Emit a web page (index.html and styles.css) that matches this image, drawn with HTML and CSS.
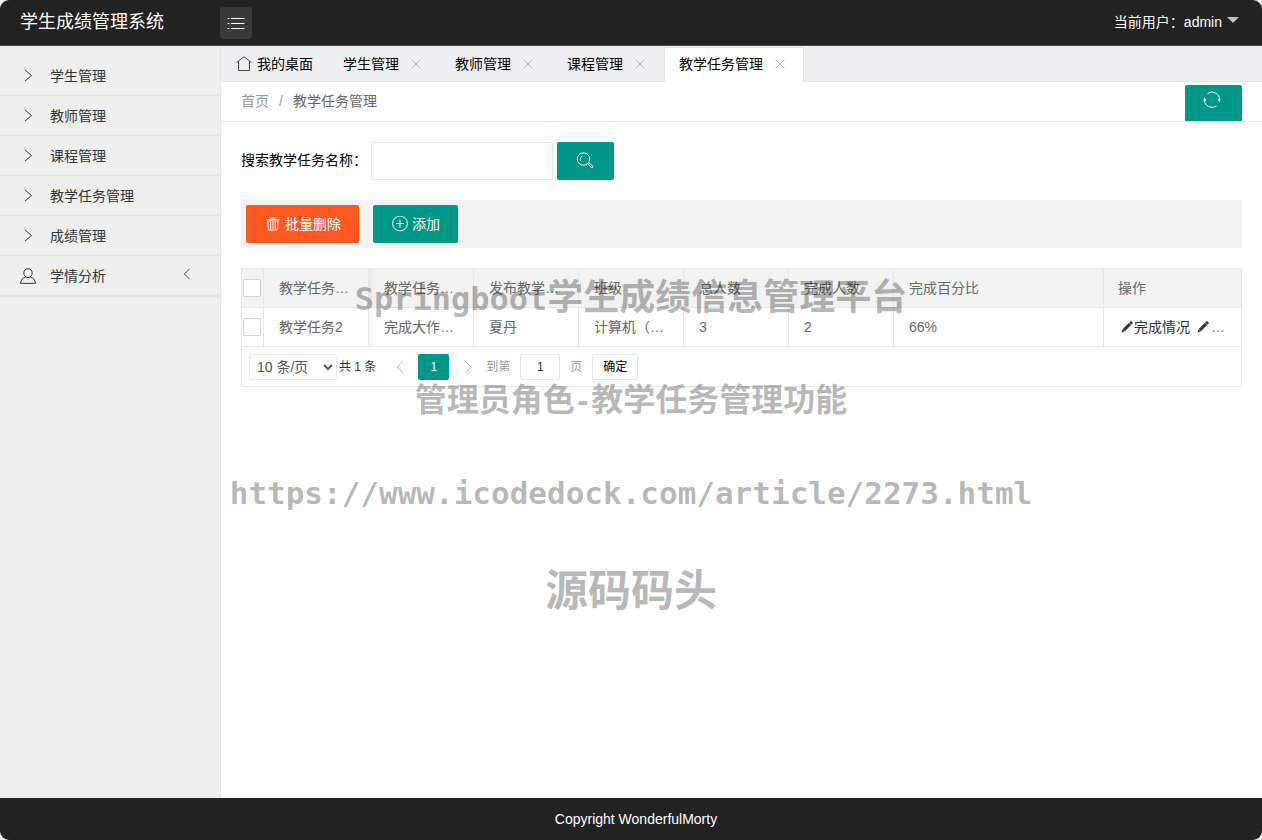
FILE: index.html
```html
<!DOCTYPE html>
<html lang="zh-CN">
<head>
<meta charset="utf-8">
<meta name="viewport" content="width=device-width, initial-scale=1">
<title>学生成绩管理系统</title>
<link rel="stylesheet" href="styles.css">
</head>
<body>
<svg class="sprite" aria-hidden="true">
  <symbol id="right" viewBox="0 0 16 16"><path d="M5 2l6.500 5.500L5 13"/></symbol>
  <symbol id="left" viewBox="0 0 16 16"><path d="M11 2L5 8l6 6"/></symbol>
  <symbol id="next" viewBox="0 0 16 16"><path d="M5 2l6 6-6 6"/></symbol>
  <symbol id="close" viewBox="0 0 14 14"><path d="M2.500 2.500l9 9M11.500 2.500l-9 9"/></symbol>
  <symbol id="pen" viewBox="0 0 14 14"><path d="M1.500 12.500l1-3.200 2.200 2.200zM2.700 9.100l6.200-6.200 2.200 2.200-6.200 6.200zM9.200 2.600l1-1c.5-.5 1-.5 1.500 0l.7.7c.5.5.5 1 0 1.500l-1 1z"/></symbol>
</svg>
<div class="app">
  <header class="header">
    <h1 class="logo">学生成绩管理系统</h1>
    <button class="toggle" type="button" aria-label="菜单">
      <svg class="icon icon-18" viewBox="0 0 18 18"><path d="M.5 4.500h2M4 4.500h13.500M.5 9.500h2M4 9.500h13.500M.5 14.500h2M4 14.500h13.500"/></svg>
    </button>
    <a class="user" href="#">当前用户：admin<span class="caret"></span></a>
  </header>
  <div class="body">
    <nav class="side">
      <a class="side-item" href="#"><svg class="icon icon-16"><use href="#right"/></svg>学生管理</a>
      <a class="side-item" href="#"><svg class="icon icon-16"><use href="#right"/></svg>教师管理</a>
      <a class="side-item" href="#"><svg class="icon icon-16"><use href="#right"/></svg>课程管理</a>
      <a class="side-item" href="#"><svg class="icon icon-16"><use href="#right"/></svg>教学任务管理</a>
      <a class="side-item" href="#"><svg class="icon icon-16"><use href="#right"/></svg>成绩管理</a>
      <a class="side-item side-last" href="#"><svg class="icon icon-16" viewBox="0 0 16 16"><path d="M8 .7c2.500 0 4.200 1.900 4.200 4.300S10.500 9.500 8 9.500 3.800 7.400 3.800 5 5.500.7 8 .7zM5.500 9.200C2.500 10 .8 12 .5 15.400h15c-.3-3.400-2-5.400-5-6.200"/></svg>学情分析<svg class="icon icon-14 side-more"><use href="#left"/></svg></a>
    </nav>
    <main class="main">
      <div class="tabs">
        <a class="tab tab-home" href="#"><svg class="icon icon-16" viewBox="0 0 16 16"><path d="M.5 6.500L8 .8l7.500 5.700M2.500 5.500v9h11v-9"/></svg>我的桌面</a>
        <a class="tab" href="#">学生管理<svg class="icon icon-14"><use href="#close"/></svg></a>
        <a class="tab" href="#">教师管理<svg class="icon icon-14"><use href="#close"/></svg></a>
        <a class="tab" href="#">课程管理<svg class="icon icon-14"><use href="#close"/></svg></a>
        <a class="tab tab-active" href="#">教学任务管理<svg class="icon icon-14"><use href="#close"/></svg></a>
      </div>
      <div class="crumbs">
        <a class="crumb" href="#">首页</a><span class="crumb">/</span><span class="crumb-now">教学任务管理</span>
        <button class="btn refresh" type="button" aria-label="刷新">
          <svg class="icon icon-18" viewBox="0 0 18 18"><path d="M4.500 2.500A7.700 7.700 0 0 1 16.600 9M13.500 15A7.700 7.700 0 0 1 1.400 8.500"/><path class="tip" d="M14.400 8.200l2.300 3 1-4zM3.600 9.500L1.300 6.300l-1 4.200z"/></svg>
        </button>
      </div>
      <div class="content">
        <form class="search">
          <label for="task">搜索教学任务名称：</label>
          <input class="box search-box" id="task" type="text">
          <button class="btn btn-icon" type="button" aria-label="搜索">
            <svg class="icon icon-18" viewBox="0 0 18 18"><circle cx="7.500" cy="7" r="6.200"/><path d="M4.500 8.500c-.5-2 .2-3.700 1.800-4.500"/><path d="M11.800 11.500l1-1 4 3.800c.6.7-.7 2-1.400 1.400z"/></svg>
          </button>
        </form>
        <div class="toolbar">
          <button class="btn btn-danger" type="button"><svg class="icon icon-14" viewBox="0 0 14 14"><path d="M0 2.500h14M4.500 1h5M1 4h12M2 4.500l.5 8.500h9l.5-8.500M4.700 5v7M7 5v7M9.300 5v7"/></svg>批量删除</button>
          <button class="btn btn-add" type="button"><svg class="icon icon-16" viewBox="0 0 16 16"><circle cx="8" cy="7.500" r="7.400"/><path d="M8 3.500v8M4 7.500h8"/></svg>添加</button>
        </div>
        <div class="grid">
          <table>
            <colgroup><col class="c-check"><col class="c-std"><col class="c-std"><col class="c-std"><col class="c-std"><col class="c-std"><col class="c-std"><col><col class="c-act"></colgroup>
            <thead>
              <tr><th class="check"><input type="checkbox" aria-label="全选"></th><th>教学任务…</th><th class="shade">教学任务…</th><th>发布教学…</th><th>班级</th><th>总人数</th><th>完成人数</th><th>完成百分比</th><th>操作</th></tr>
            </thead>
            <tbody>
              <tr><td class="check"><input type="checkbox" aria-label="选择"></td><td>教学任务2</td><td class="shade">完成大作…</td><td>夏丹</td><td>计算机（…</td><td>3</td><td>2</td><td>66%</td><td><div class="actions"><a href="#"><svg class="solid icon-14"><use href="#pen"/></svg>完成情况</a><a href="#" aria-label="编辑"><svg class="solid icon-14"><use href="#pen"/></svg></a><span>…</span></div></td></tr>
            </tbody>
          </table>
          <div class="pager">
            <select class="box limit" aria-label="每页条数"><option>10 条/页</option></select>
            <span class="total">共 1 条</span>
            <button class="arrow" type="button" aria-label="上一页"><svg class="icon icon-16"><use href="#left"/></svg></button>
            <button class="page" type="button">1</button>
            <button class="arrow" type="button" aria-label="下一页"><svg class="icon icon-16"><use href="#next"/></svg></button>
            <label for="page">到第</label>
            <input class="box jump" id="page" type="text" value="1">
            <span>页</span>
            <button class="box confirm" type="button">确定</button>
          </div>
        </div>
      </div>
    </main>
  </div>
  <footer class="footer">Copyright WonderfulMorty</footer>
  <div class="mark">
    <p class="mark-title"><span class="mark-latin">Springboot</span>学生成绩信息管理平台</p>
    <p class="mark-role">管理员角色<span class="mark-dash">-</span>教学任务管理功能</p>
    <p class="mark-url">https://www.icodedock.com/article/2273.html</p>
    <p class="mark-brand">源码码头</p>
  </div>
</div>
</body>
</html>
```

FILE: styles.css
```css
* { box-sizing: border-box; }
body {
  margin: 0;
  background: #f4f4f4;
  color: #000;
  font: 14px/20px "Liberation Sans", "Noto Sans CJK SC", sans-serif;
}
a { color: inherit; text-decoration: none; }
button, input, select { font: inherit; margin: 0; }
button { border: 0; cursor: pointer; }
.sprite { display: none; }
.icon { fill: none; stroke: currentColor; stroke-width: 1; flex: none; }
.solid, .tip { fill: currentColor; stroke: none; flex: none; }
.icon-14 { width: 14px; height: 14px; }
.icon-16 { width: 16px; height: 16px; }
.icon-18 { width: 18px; height: 18px; }

.app {
  position: relative;
  display: flex;
  flex-direction: column;
  min-height: 100vh;
  overflow: hidden;
  border-radius: 9px;
  background: #fff;
}
.header {
  display: flex;
  align-items: center;
  height: 46px;
  padding-right: 23px;
  background: #222;
  border-bottom: 1px solid #484548;
  color: #fff;
}
.logo {
  width: 220px;
  margin: 0;
  padding: 0 0 2px 20px;
  font-size: 18px;
  font-weight: 400;
}
.toggle {
  display: grid;
  place-items: center;
  width: 32px;
  height: 32px;
  padding: 0;
  border-radius: 3px;
  background: #393939;
  color: #fff;
}
.user { display: flex; align-items: center; gap: 5px; margin-left: auto; padding-bottom: 2px; }
.caret {
  margin-bottom: 3px;
  border: 6px solid transparent;
  border-top-color: #c2c2c2;
  border-bottom: 0;
}

.body { display: flex; flex: 1; }
.side {
  flex: none;
  width: 221px;
  padding-top: 10px;
  background: #eee;
  border-right: 1px solid #e3e3e3;
  color: #333;
}
.side-item {
  display: flex;
  align-items: center;
  gap: 14px;
  height: 40px;
  padding: 0 26px 0 20px;
  border-bottom: 1px solid #e2e2e2;
}
.side-last { height: 41px; border-bottom-width: 2px; }
.side-more { margin: 0 0 4px auto; }

.main { flex: 1; min-width: 0; }
.tabs {
  display: flex;
  align-items: flex-end;
  height: 36px;
  background: #eeeef0;
  border-bottom: 1px solid #e2e2e2;
}
.tab {
  display: flex;
  align-items: center;
  gap: 10px;
  height: 34px;
  padding: 0 17px 0 15px;
}
.tab .icon-14 { color: #bbb; }
.tab-home { gap: 5px; padding-right: 15px; }
.tab-home .icon { color: #444; }
.tab-active {
  margin-bottom: -1px;
  height: 35px;
  padding: 0 16px 3px 14px;
  background: #fff;
  border: 1px solid #e2e2e2;
  border-bottom: 0;
}
.crumbs {
  display: flex;
  align-items: center;
  gap: 10px;
  height: 40px;
  padding: 0 20px 2px;
  border-bottom: 1px solid #e5e5e5;
}
.crumb { color: #999; }
.crumb-now { color: #666; }
.btn {
  display: flex;
  align-items: center;
  justify-content: center;
  gap: 4px;
  height: 38px;
  padding: 0 18px;
  border-radius: 2px;
  background: #009688;
  color: #fff;
}
.refresh {
  align-self: flex-end;
  align-items: flex-start;
  width: 57px;
  height: 36px;
  margin: 0 0 -2px auto;
  padding: 6px 3px 0 0;
  border-radius: 2px 2px 0 0;
}
.btn-icon { width: 57px; padding: 0 2px 0 0; }
.btn-danger { padding: 0 18px 0 20px; gap: 5px; background: #ff5722; }
.btn-add { padding-left: 19px; }

.content { padding: 20px; }
.box {
  border: 1px solid #e6e6e6;
  border-radius: 2px;
  background: #fff;
}
.search { display: flex; align-items: center; gap: 4px; }
.search label { width: 126px; padding-bottom: 2px; white-space: nowrap; }
.search-box { width: 182px; height: 38px; padding: 0 10px; }
.toolbar {
  display: flex;
  gap: 14px;
  margin: 20px 0;
  padding: 5px;
  background: #f2f2f2;
}

.grid { border: 1px solid #e6e6e6; color: #666; }
table { width: 100%; table-layout: fixed; border-collapse: separate; border-spacing: 0; }
.c-check { width: 22px; }
.c-std { width: 105px; }
.c-act { width: 137px; }
th, td {
  height: 39px;
  padding: 0 0 0 15px;
  border-right: 1px solid #e6e6e6;
  border-bottom: 1px solid #e6e6e6;
  font-weight: 400;
  text-align: left;
  white-space: nowrap;
}
th { background-color: #f2f2f2; }
th:last-child, td:last-child { border-right: 0; padding-left: 14px; }
.shade {
  background-image: linear-gradient(to right, #0000000a, #00000000 8px);
  background-clip: padding-box;
}
.check { padding: 0 0 0 1px; }
.check input {
  display: block;
  appearance: none;
  width: 18px;
  height: 18px;
  border: 1px solid #d2d2d2;
  border-radius: 2px;
  background: #fff;
}
.actions { display: flex; align-items: center; gap: 6px; padding-left: 2px; }
.actions a { display: flex; align-items: center; color: #333; }
.actions span { margin-left: -5px; }

.pager {
  display: flex;
  align-items: center;
  height: 39px;
  padding: 0 7px;
  color: #999;
  font-size: 12px;
}
.limit { width: 88px; height: 26px; padding-left: 3px; color: #555; font-size: 14px; }
.total { margin: 0 12px 0 2px; color: #333; }
.arrow {
  display: grid;
  place-items: center;
  width: 24px;
  height: 26px;
  padding: 0;
  background: none;
  color: #bbb;
}
.page {
  width: 31px;
  height: 26px;
  margin: 0 7px 0 6px;
  padding: 0;
  border-radius: 2px;
  background: #009688;
  color: #fff;
}
.pager label { margin-left: 6px; }
.jump { width: 40px; height: 26px; margin: 0 10px; padding: 0; color: #333; text-align: center; }
.confirm { width: 46px; height: 26px; margin-left: 10px; padding: 0; }

.footer {
  height: 42px;
  padding: 11px 0 0 10px;
  background: #222;
  color: #fff;
  text-align: center;
}

.mark {
  position: absolute;
  top: 270px;
  left: 0;
  right: 0;
  color: #0000004d;
  font-family: "Noto Sans CJK SC", sans-serif;
  font-weight: 700;
  text-align: center;
  white-space: nowrap;
  pointer-events: none;
}
.mark p { margin: 0; line-height: 48px; }
.mark-latin, .mark-url, .mark-dash { font-family: "DejaVu Sans Mono", monospace; }
.mark .mark-title { font-size: 36px; }
.mark-latin { font-size: 32px; line-height: 32px; }
.mark .mark-role { margin-top: 55px; font-size: 32px; }
.mark-dash { font-size: 27px; line-height: 27px; }
.mark .mark-url { margin-top: 48px; font-size: 31px; }
.mark .mark-brand { margin-top: 46px; font-size: 43px; }
```
